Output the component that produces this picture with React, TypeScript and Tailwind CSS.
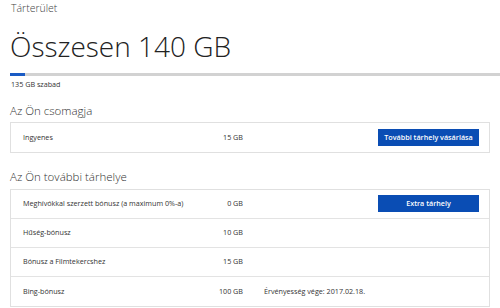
import React from "react";

type Row = {
  label: string;
  size: string;
  note?: string;
  action?: string;
};

const plan: Row[] = [
  { label: "Ingyenes", size: "15 GB", action: "További tárhely vásárlása" },
];

const extras: Row[] = [
  {
    label: "Meghívókkal szerzett bónusz (a maximum 0%-a)",
    size: "0 GB",
    action: "Extra tárhely",
  },
  { label: "Hűség-bónusz", size: "10 GB" },
  { label: "Bónusz a Filmtekercshez", size: "15 GB" },
  { label: "Bing-bónusz", size: "100 GB", note: "Érvényesség vége: 2017.02.18." },
];

const StorageRow = ({ row, last }: { row: Row; last: boolean }) => (
  <div
    className={`flex items-center h-[29px] pl-3 pr-[10px] text-[7.2px] text-[#333] ${
      last ? "" : "border-b border-[#e3e3e3]"
    }`}
  >
    <span className="w-[180px]">{row.label}</span>
    <span className="w-[40px] text-right">{row.size}</span>
    <span className="flex-1 pl-[21px]">{row.note}</span>
    {row.action && (
      <button className="w-[101px] h-[17px] bg-[#0a4db4] text-white font-semibold text-[7.2px]">
        {row.action}
      </button>
    )}
  </div>
);

const Section = ({ title, rows }: { title: string; rows: Row[] }) => (
  <section>
    <h2 className="text-[11.5px] font-light text-[#333] leading-none mb-[6px]">{title}</h2>
    <div className="border border-[#e0e0e0] mr-[10px]">
      {rows.map((row, i) => (
        <StorageRow key={row.label} row={row} last={i === rows.length - 1} />
      ))}
    </div>
  </section>
);

const App = () => {
  return (
    <main
      className="w-[500px] h-[308px] bg-white pl-[10px] pt-[3px] overflow-hidden"
      style={{ fontFamily: '"Open Sans", "Noto Sans", sans-serif' }}
    >
      {/* fejléc */}
      <p className="text-[10.5px] font-light text-[#444] leading-none pl-[1px]">Tárterület</p>
      <h1 className="text-[28px] font-light text-[#222] leading-none mt-[18px]">
        Összesen 140 GB
      </h1>

      {/* foglaltság sáv */}
      <div className="mt-[13px] h-[3px] bg-[#d2d2d2] flex">
        <div className="w-[15px] bg-[#1a5bc4]" />
      </div>
      <p className="text-[7.2px] text-[#333] mt-[5px] pl-[1px] leading-none">135 GB szabad</p>

      <div className="mt-[17px] flex flex-col gap-[18px]">
        <Section title="Az Ön csomagja" rows={plan} />
        <Section title="Az Ön további tárhelye" rows={extras} />
      </div>
    </main>
  );
};

export default App;
